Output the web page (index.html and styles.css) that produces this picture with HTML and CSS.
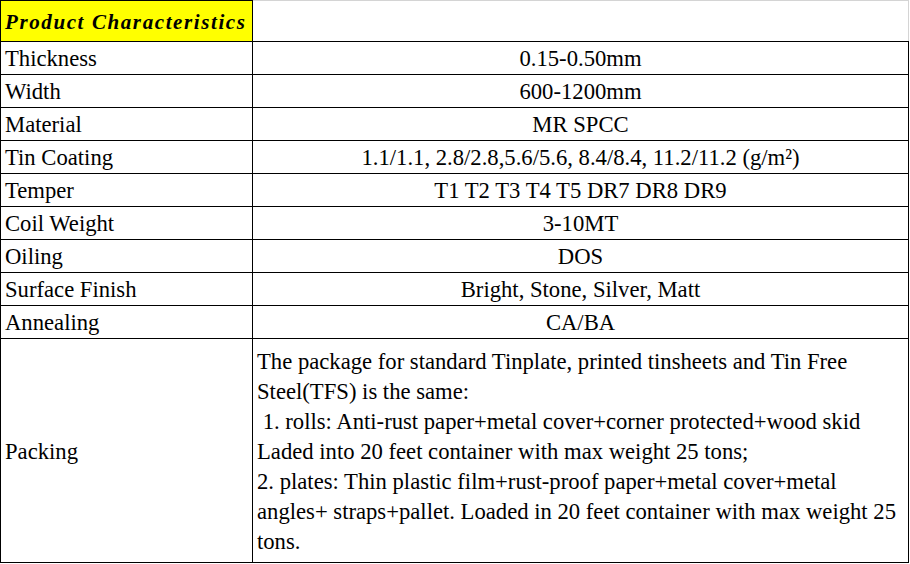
FILE: index.html
```html
<!DOCTYPE html>
<html>
<head>
<meta charset="utf-8">
<link rel="stylesheet" href="styles.css">
</head>
<body>
<table class="spec">
  <colgroup><col class="c-label"><col class="c-value"></colgroup>
  <tr class="head">
    <td class="title">Product Characteristics</td>
    <td class="blank"></td>
  </tr>
  <tr><td class="label">Thickness</td><td class="value">0.15-0.50mm</td></tr>
  <tr><td class="label">Width</td><td class="value">600-1200mm</td></tr>
  <tr><td class="label">Material</td><td class="value">MR SPCC</td></tr>
  <tr><td class="label">Tin Coating</td><td class="value">1.1/1.1, 2.8/2.8,5.6/5.6, 8.4/8.4, 11.2/11.2 (g/m²)</td></tr>
  <tr><td class="label">Temper</td><td class="value">T1 T2 T3 T4 T5 DR7 DR8 DR9</td></tr>
  <tr><td class="label">Coil Weight</td><td class="value">3-10MT</td></tr>
  <tr><td class="label">Oiling</td><td class="value">DOS</td></tr>
  <tr><td class="label">Surface Finish</td><td class="value">Bright, Stone, Silver, Matt</td></tr>
  <tr><td class="label">Annealing</td><td class="value">CA/BA</td></tr>
  <tr class="tall">
    <td class="label">Packing</td>
    <td class="text">The package for standard Tinplate, printed tinsheets and Tin Free<br>Steel(TFS) is the same:<br>&nbsp;1. rolls: Anti-rust paper+metal cover+corner protected+wood skid<br>Laded into 20 feet container with max weight 25 tons;<br>2. plates: Thin plastic film+rust-proof paper+metal cover+metal<br>angles+ straps+pallet. Loaded in 20 feet container with max weight 25<br>tons.</td>
  </tr>
</table>
</body>
</html>
```
FILE: styles.css
```css
html, body {
  margin: 0;
  padding: 0;
  background: #ffffff;
}
body {
  font-family: "Liberation Serif", serif;
  color: #000;
}
.spec {
  border-collapse: collapse;
  table-layout: fixed;
  width: 908px;
  font-family: "Liberation Serif", serif;
  font-size: 22.67px;
}
.c-label { width: 252px; }
.c-value { width: 656px; }
.spec td {
  font-family: "Liberation Serif", serif;
  border: 1px solid #000;
  padding: 2px 4px 0;
  height: 30px;
  line-height: 30px;
  vertical-align: middle;
  white-space: nowrap;
  overflow: hidden;
}
.spec .head td { height: 38px; }
.spec td.title {
  background: #ffff00;
  font-family: "Liberation Serif", serif;
  font-weight: bold;
  font-style: italic;
  font-size: 21px;
  letter-spacing: 1.6px;
}
.spec td.blank {
  border-top: 1px solid #d4d4d4;
  border-right: 1px solid #d4d4d4;
  border-bottom: 1px solid #000;
}
.spec td.label {
  text-align: left;
}
.spec td.value {
  text-align: center;
}
.spec td.text {
  text-align: left;
  height: 221px;
}
```
